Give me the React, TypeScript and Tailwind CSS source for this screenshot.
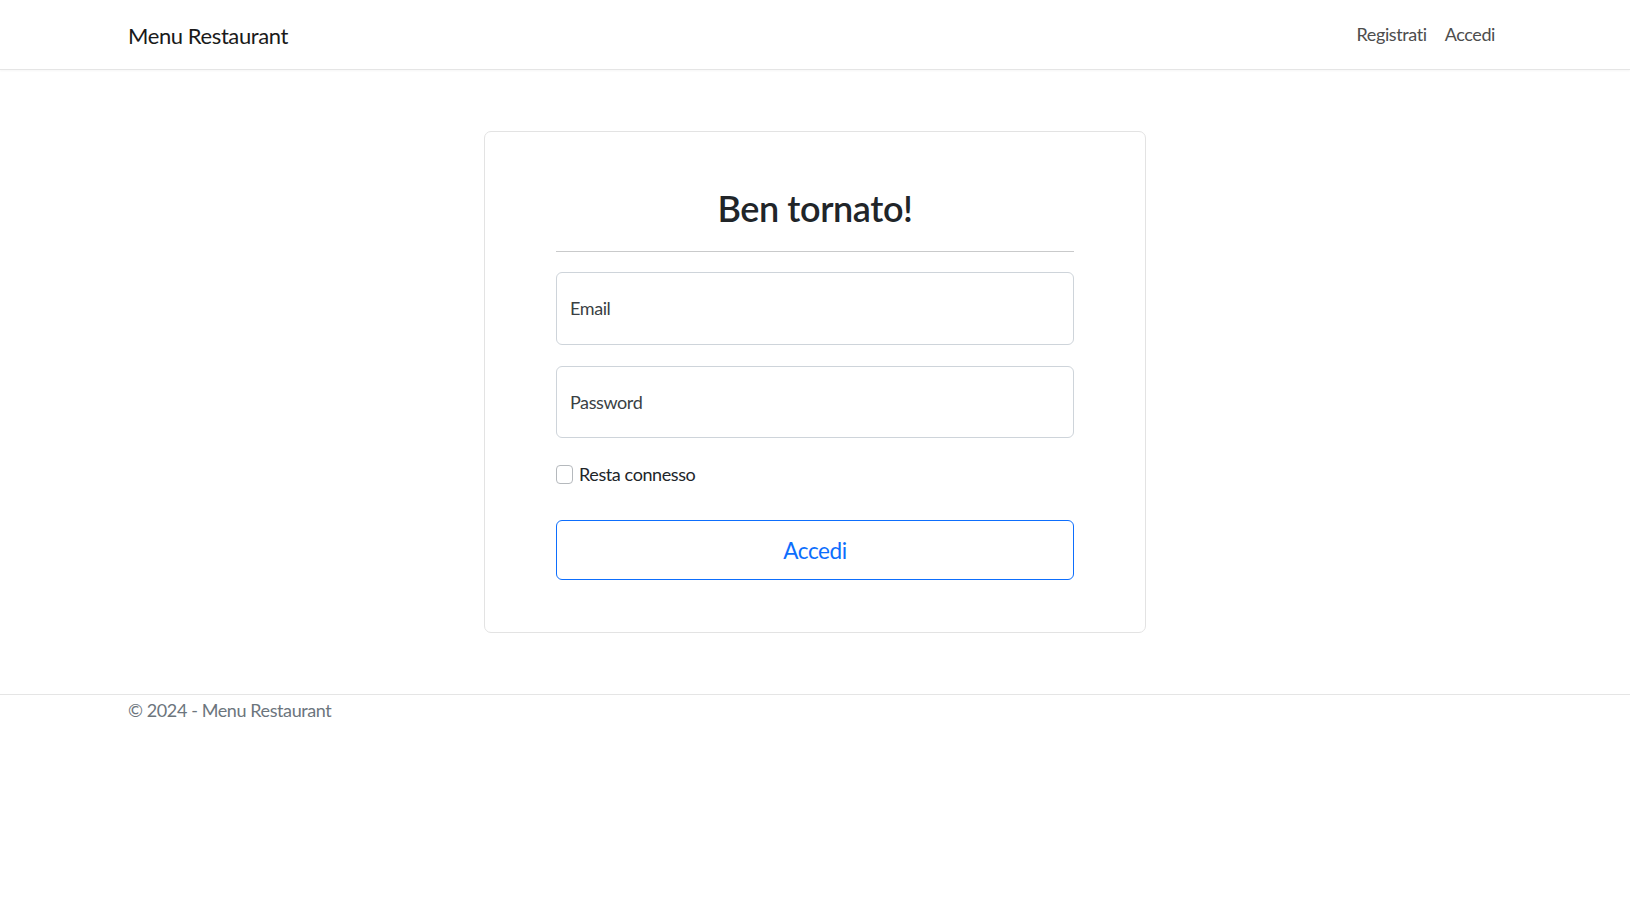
import React from "react";

export default function App() {
  const font = { fontFamily: "Lato, 'Open Sans', sans-serif" };
  return (
    <div className="min-h-[918px] bg-white text-[#212529] tracking-[-0.025em]" style={font}>
      <nav className="h-[70px] border-b border-[#e5e5e5] shadow-[0_1px_2px_rgba(0,0,0,0.04)]">
        <div className="mx-auto flex h-full w-[1380px] items-center justify-between pl-[3px]">
          <span className="mt-[2px] text-[22px] text-[#1a1a1a] leading-none">Menu Restaurant</span>
          <div className="flex items-center text-[18px] text-[#4d4d4d]">
            <span className="px-[9px]">Registrati</span>
            <span className="pl-[9px] pr-[10px]">Accedi</span>
          </div>
        </div>
      </nav>

      <main className="flex justify-center pt-[61px] pb-[61px]">
        <div className="w-[662px] rounded-[7px] border border-[#e3e3e3] px-[71px] pt-[52px] pb-[52px]">
          <h2 className="text-center text-[36px] font-semibold leading-[48px] text-[#212529]">Ben tornato!</h2>
          <hr className="mt-[19px] mb-[20px] border-t border-[#c9cacb]" />
          <div className="flex flex-col gap-[21px]">
            <div className="flex h-[73px] items-center rounded-[6px] border border-[#ced4da] px-[13px] text-[18px] text-[#3a3f44]">
              Email
            </div>
            <div className="flex h-[72px] items-center rounded-[6px] border border-[#ced4da] px-[13px] text-[18px] text-[#3a3f44]">
              Password
            </div>
          </div>
          <label className="mt-[21px] flex h-[30px] items-center gap-[6px] text-[18px] text-[#212529]">
            <span className="h-[19px] w-[17px] rounded-[4px] border border-[#b5b9bd] bg-white" />
            Resta connesso
          </label>
          <button className="mt-[31px] h-[60px] w-full rounded-[6px] border border-[#0d6efd] pt-[1px] text-[22.5px] text-[#0d6efd]">
            Accedi
          </button>
        </div>
      </main>

      <footer className="border-t border-[#e5e5e5]">
        <div className="mx-auto w-[1380px] pl-[3px] pt-[2px] text-[18px] leading-[27px] text-[#6c757d]">© 2024 - Menu Restaurant</div>
      </footer>
    </div>
  );
}
